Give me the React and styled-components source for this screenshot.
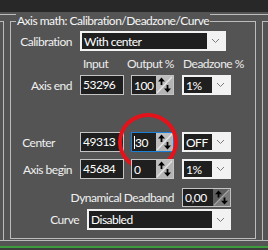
import React from "react";
import styled, { createGlobalStyle } from "styled-components";

const GlobalStyle = createGlobalStyle`
  html, body {
    margin: 0;
    background: #545454;
  }
  body {
    font-family: Lato, "Noto Sans", sans-serif;
    font-size: 12px;
    letter-spacing: -0.5px;
    color: #f2f2f2;
  }
  * {
    box-sizing: border-box;
  }
`;

const Window = styled.div`
  width: 268px;
  height: 250px;
  overflow: hidden;
  background: #545454;
  display: flex;
  flex-direction: column;
`;

const TopStrip = styled.div`
  flex: none;
  height: 12px;
  background: #282828;
`;

const Pane = styled.div`
  flex: none;
  margin-top: 2px;
  height: 227px;
  border-top: 1px solid #bcbcbc;
  border-bottom: 1px solid #bcbcbc;
  padding-top: 6px;
  display: flex;
  gap: 6px;
`;

const SideBox = styled.div`
  flex: ${(p) => (p.$grow ? 1 : "none")};
  width: 4px;
  border-top: 1px solid #bcbcbc;
  border-left: ${(p) => (p.$side === "right" ? "1px solid #bcbcbc" : "none")};
  border-right: ${(p) => (p.$side === "left" ? "1px solid #bcbcbc" : "none")};
`;

const GroupBox = styled.div`
  position: relative;
  flex: none;
  align-self: flex-start;
  width: 246px;
  height: 218px;
  border: 1px solid #bcbcbc;
  padding-top: 9px;
  display: flex;
  flex-direction: column;
`;

const GroupTitle = styled.div`
  position: absolute;
  top: -9px;
  left: 5px;
  padding: 0 1px;
  background: #545454;
  color: #f6f6f6;
  line-height: 16px;
  white-space: nowrap;
`;

const Row = styled.div`
  display: grid;
  grid-template-columns: 69px 51px 51px 49px;
  align-items: center;
  height: ${(p) => p.$h || 20}px;
  margin-top: ${(p) => p.$mt || 0}px;
`;

const Label = styled.div`
  grid-column: ${(p) => p.$span || "1 / 2"};
  justify-self: end;
  margin-right: ${(p) => (p.$gap ?? 8)}px;
  white-space: nowrap;
  color: #f0f0f0;
`;

const ColHead = styled.div`
  justify-self: start;
  margin-left: ${(p) => p.$shift || 0}px;
  white-space: nowrap;
  color: #ececec;
`;

const TextBox = styled.div`
  width: 44px;
  height: 20px;
  border: 1px solid #c4c4c4;
  background: #1f1f1f;
  color: #ffffff;
  padding-left: 2px;
  line-height: 18px;
`;

const SpinWrap = styled.div`
  position: relative;
  justify-self: start;
`;

const SpinBox = styled.div`
  display: flex;
  width: ${(p) => p.$w || 43}px;
  height: ${(p) => p.$h || 20}px;
  border: 1px solid ${(p) => (p.$focus ? "#1a7fd6" : "#c4c4c4")};
  background: #1f1f1f;
`;

const SpinText = styled.div`
  flex: 1;
  display: flex;
  align-items: center;
  padding-left: 2px;
  color: #ffffff;
`;

const Caret = styled.span`
  display: inline-block;
  width: 1px;
  height: 13px;
  background: #ffffff;
`;

const SpinButton = styled.svg`
  flex: none;
  width: 17px;
  height: 100%;
`;

const Combo = styled.div`
  grid-column: ${(p) => p.$span || "auto"};
  justify-self: start;
  display: flex;
  width: ${(p) => p.$w || 49}px;
  height: ${(p) => p.$h || 20}px;
  margin-left: ${(p) => p.$ml || 0}px;
  border: 2px solid #f2f2f2;
  background: #f2f2f2;
`;

const ComboText = styled.div`
  flex: 1;
  background: #1f1f1f;
  color: #ffffff;
  padding-left: 2px;
  display: flex;
  align-items: center;
  white-space: nowrap;
`;

const ComboDrop = styled.div`
  flex: none;
  width: 17px;
  display: flex;
  align-items: center;
  justify-content: center;
`;

const Ring = styled.div`
  position: absolute;
  left: -13px;
  top: -19px;
  width: 60px;
  height: 58px;
  border: 4px solid #e3131c;
  border-radius: 50%;
  pointer-events: none;
`;

const Footer = styled.div`
  flex: 1;
  margin-top: 5px;
  border-top: 2px solid #3d9a3d;
  background: #3c3c3c;
`;

const Spinner = ({ dark }) => (
  <SpinButton viewBox="0 0 17 18" preserveAspectRatio="none">
    <rect x="0" y="0" width="17" height="18" fill={dark ? "#5e5e5e" : "#bebebe"} />
    <polygon points="17,0 17,18 0,18" fill={dark ? "#7a7a7a" : "#b4b4b4"} />
    <line x1="1" y1="17" x2="16" y2="1" stroke={dark ? "#a8a8a8" : "#e6e6e6"} strokeWidth="1.2" />
    <path d="M5.5 1.5 L2 5.5 H4.6 V9 H6.4 V5.5 H9 Z" fill="#000" />
    <path d="M11.5 16.5 L8 12.5 H10.6 V9 H12.4 V12.5 H15 Z" fill="#000" />
  </SpinButton>
);

const Chevron = () => (
  <svg width="9" height="6" viewBox="0 0 9 6">
    <polyline points="1,1 4.5,4.5 8,1" fill="none" stroke="#7c7c7c" strokeWidth="1" />
  </svg>
);

const Select = ({ value, ...rest }) => (
  <Combo {...rest}>
    <ComboText>{value}</ComboText>
    <ComboDrop>
      <Chevron />
    </ComboDrop>
  </Combo>
);

const App = () => {
  return (
    <Window>
      <GlobalStyle />
      <TopStrip />
      <Pane>
        <SideBox $side="left" />
        <GroupBox>
          <GroupTitle>Axis math: Calibration/Deadzone/Curve</GroupTitle>

          <Row>
            <Label>Calibration</Label>
            <Select value="With center" $span="2 / 5" $w={146} />
          </Row>

          <Row $h={18} $mt={3}>
            <span />
            <ColHead $shift={3}>Input</ColHead>
            <ColHead $shift={-4}>Output %</ColHead>
            <ColHead $shift={1}>Deadzone %</ColHead>
          </Row>

          <Row $mt={3}>
            <Label>Axis end</Label>
            <TextBox>53296</TextBox>
            <SpinWrap>
              <SpinBox>
                <SpinText>100</SpinText>
                <Spinner />
              </SpinBox>
            </SpinWrap>
            <Select value="1%" />
          </Row>

          <Row $mt={37}>
            <Label $gap={25}>Center</Label>
            <TextBox>49313</TextBox>
            <SpinWrap>
              <SpinBox $focus>
                <SpinText>
                  <Caret />
                  30
                </SpinText>
                <Spinner />
              </SpinBox>
              <Ring />
            </SpinWrap>
            <Select value="OFF" />
          </Row>

          <Row $mt={7}>
            <Label>Axis begin</Label>
            <TextBox>45684</TextBox>
            <SpinWrap>
              <SpinBox>
                <SpinText>0</SpinText>
                <Spinner />
              </SpinBox>
            </SpinWrap>
            <Select value="1%" />
          </Row>

          <Row $mt={8}>
            <Label $span="1 / 4">Dynamical Deadband</Label>
            <SpinWrap>
              <SpinBox $w={49} $h={19}>
                <SpinText>0,00</SpinText>
                <Spinner dark />
              </SpinBox>
            </SpinWrap>
          </Row>

          <Row $h={21} $mt={2}>
            <Label $gap={1}>Curve</Label>
            <Select value="Disabled" $span="2 / 5" $w={144} $h={21} $ml={7} />
          </Row>
        </GroupBox>
        <SideBox $side="right" $grow />
      </Pane>
      <Footer />
    </Window>
  );
};

export default App;
